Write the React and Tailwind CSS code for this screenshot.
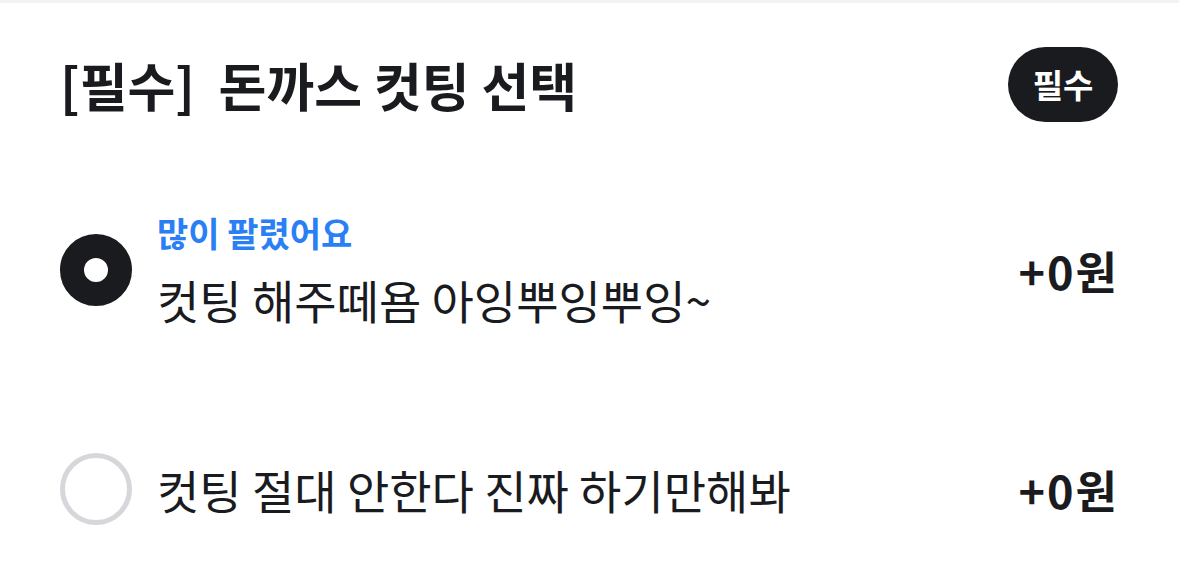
export default function App() {
  const font = { fontFamily: '"Noto Sans CJK KR", "Noto Sans", sans-serif' };
  return (
    <div className="w-[1179px] h-[576px] bg-white border-t-[3px] border-[#f2f3f5] text-[#191b1f] overflow-hidden" style={font}>
      <div className="flex h-[75px] items-center justify-between pl-[60px] pr-[61px] mt-[44px]">
        <h1 className="text-[52px] font-bold leading-none">[필수]&nbsp; 돈까스 컷팅 선택</h1>
        <span className="flex h-[75px] w-[110px] items-center justify-center rounded-full bg-[#1a1b1e] text-[33px] font-bold text-white">필수</span>
      </div>

      <div className="mt-[91px] flex items-center pl-[60px] pr-[60px]">
        <span className="h-[72px] w-[72px] shrink-0 rounded-full border-[24px] border-[#1a1b1e]" />
        <div className="ml-[25px] flex flex-1 flex-col">
          <span className="text-[34px] font-bold leading-[40px] text-[#2a7ff5]">많이 팔렸어요</span>
          <span className="mt-[18px] text-[46px] leading-[56px]">컷팅 해주떼욤 아잉뿌잉뿌잉~</span>
        </div>
        <span className="text-[45px] font-bold leading-none tracking-[2px]">+0원</span>
      </div>

      <div className="mt-[126px] flex items-center pl-[60px] pr-[60px]">
        <span className="h-[72px] w-[72px] shrink-0 rounded-full border-[5px] border-[#d6d7da]" />
        <span className="ml-[25px] flex-1 text-[46px] leading-[56px]">컷팅 절대 안한다 진짜 하기만해봐</span>
        <span className="text-[45px] font-bold leading-none tracking-[2px]">+0원</span>
      </div>
    </div>
  );
}
